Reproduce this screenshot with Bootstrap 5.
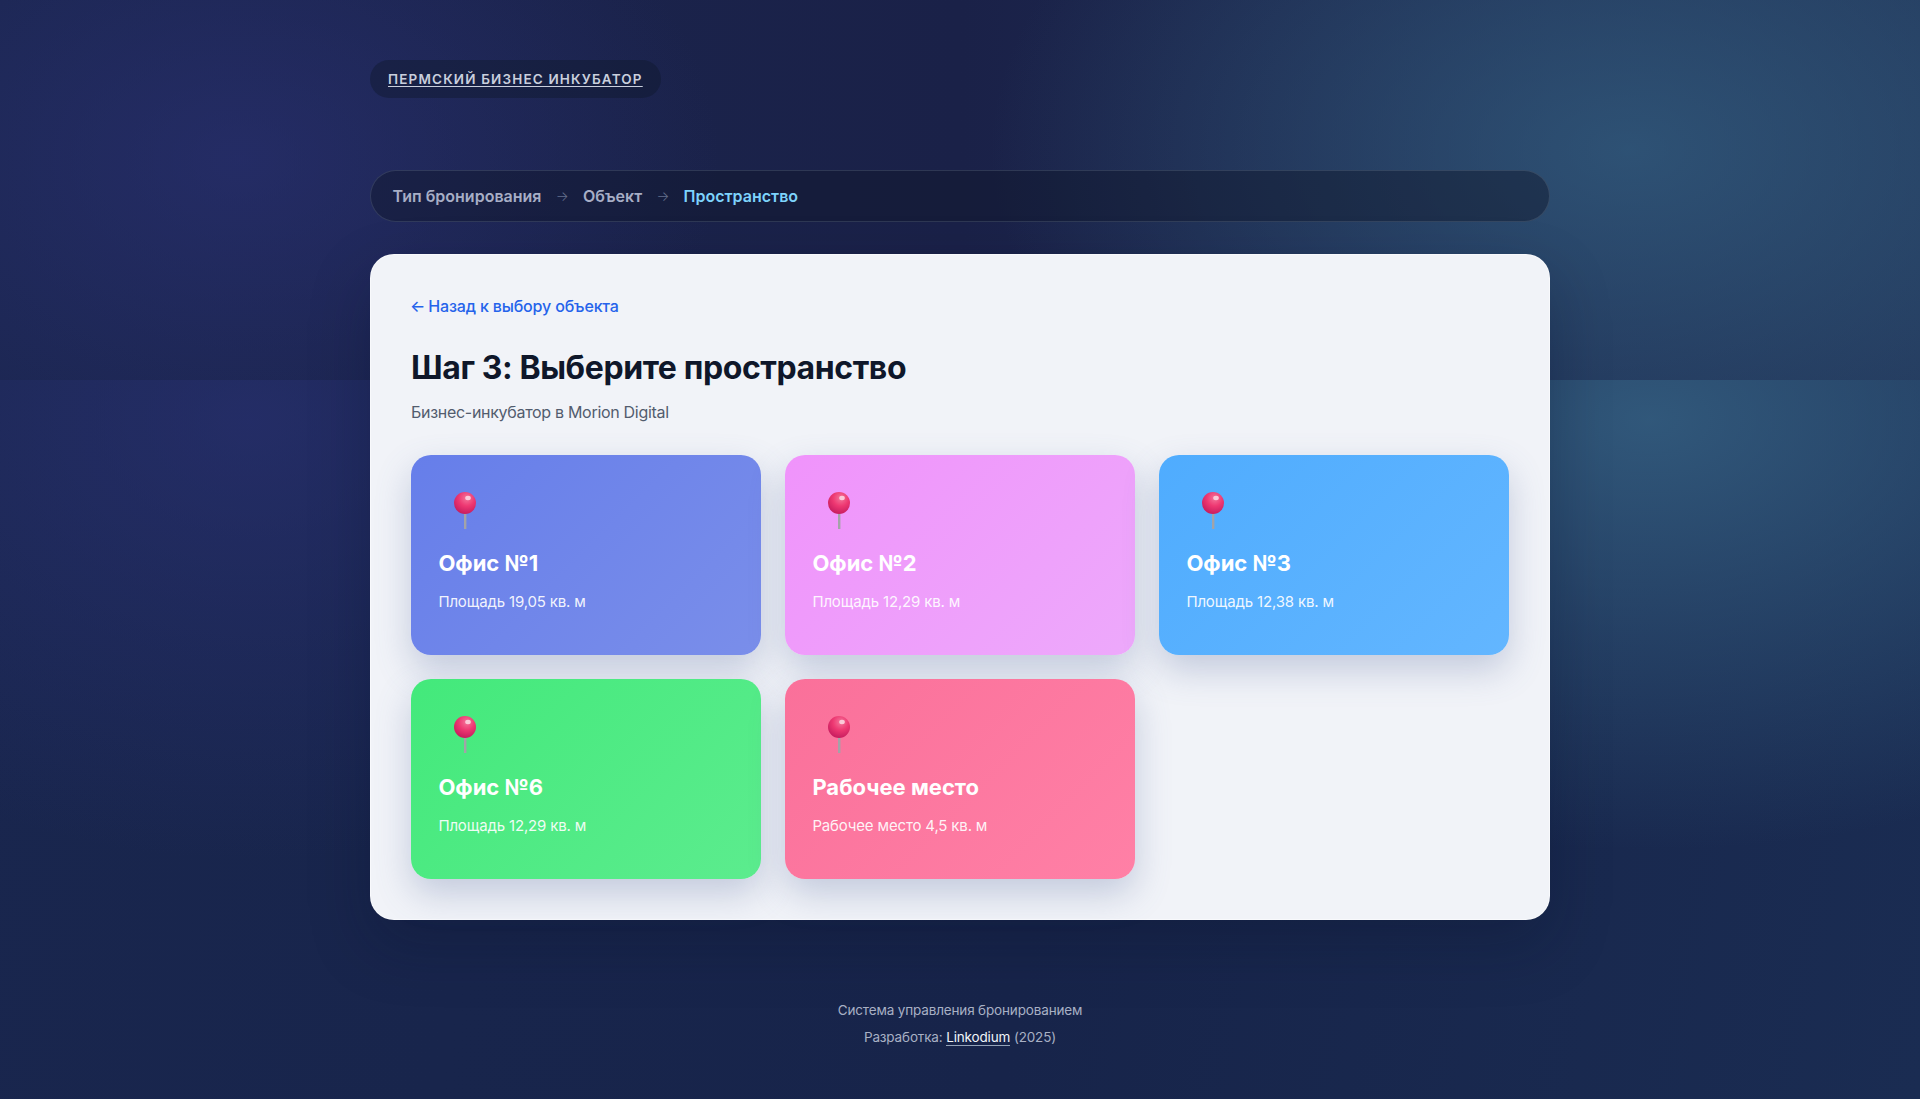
<!DOCTYPE html>
<html lang="ru">
<head>
<meta charset="utf-8">
<title>Пермский бизнес инкубатор</title>
<link rel="stylesheet" href="https://cdn.jsdelivr.net/npm/bootstrap@5.3.0/dist/css/bootstrap.min.css">
<style>
html,body{height:100%}
body{font-family:"Inter","Noto Sans",sans-serif;min-height:1099px;background-color:#17244a;
background-image:
 radial-gradient(ellipse 480px 340px at 240px 160px,rgba(44,50,120,.55),transparent 100%),
 radial-gradient(ellipse 640px 400px at 1630px 150px,rgba(52,96,130,.7),transparent 100%),
 linear-gradient(90deg,#1b2650 0%,#1a2148 50%,#22365a 100%),
 radial-gradient(ellipse 600px 440px at 250px 40px,rgba(44,50,120,.58),transparent 100%),
 radial-gradient(ellipse 720px 430px at 1650px 40px,rgba(54,98,132,.82),transparent 100%),
 linear-gradient(100deg,#19264e 0%,#17244a 55%,#1a2c52 100%);
background-size:100% 380px,100% 380px,100% 380px,100% 719px,100% 719px,100% 719px;
background-position:0 0,0 0,0 0,0 380px,0 380px,0 380px;
background-repeat:no-repeat}
.shell{width:1180px;padding-top:60px}
.logo-pill{height:38px;padding:0 18px;background:rgba(15,23,42,.42);margin-bottom:72px}
.logo-pill a{font-size:13.5px;font-weight:600;letter-spacing:1.16px;color:#c9cfdd;text-underline-offset:2px}
.crumbs{height:52px;padding:0 21.5px;background:rgba(15,23,42,.45);border:1px solid rgba(148,163,184,.2);margin-bottom:32px;font-size:16px;font-weight:600;color:#a7aec6}
.crumbs .sep{color:#64708c;font-weight:300;font-size:13.5px;margin:0 14.3px}
.crumbs .now{color:#7dd3fc}
.panel{background:#f1f3f8;border:1px solid rgba(255,255,255,.5);border-radius:24px;padding:39px 40px 40px;box-shadow:0 25px 60px rgba(8,14,40,.25)}
.back{color:#2563eb;font-size:16px;font-weight:500;letter-spacing:-.16px;text-decoration:none;line-height:24px}
.back span{margin:0 -1px 0 -1px}
.ttl{font-size:32px;font-weight:700;letter-spacing:-.4px;color:#0f172a;line-height:44px;margin:28px 0 10px}
.sub{font-size:16px;letter-spacing:-.3px;color:#525c6e;line-height:24px;margin-bottom:31px}
.tiles{display:grid;grid-template-columns:repeat(3,350px);gap:24.5px 24px;grid-auto-rows:199.5px}
.tile{border-radius:20px;padding:36.5px 27.4px 0;color:#fff;box-shadow:0 15px 35px rgba(90,110,160,.3)}
.tile h3{font-size:22px;font-weight:700;line-height:30px;margin:12px 0 13px}
.tile p{font-size:15px;letter-spacing:-.16px;line-height:22px;margin:0;color:rgba(255,255,255,.92)}
.pin{display:block;margin-left:12px;width:30px;height:44px}
.t1{background:linear-gradient(135deg,#667eea,#7a8eea)}
.t2{background:linear-gradient(135deg,#f093fb,#eda9fb)}
.t3{background:linear-gradient(135deg,#4facfe,#63b6ff)}
.t4{background:linear-gradient(135deg,#43e97b,#5cec8e)}
.t5{background:linear-gradient(135deg,#fa709a,#ff80a6)}
.foot{margin-top:77px;font-size:13.5px;letter-spacing:-.15px;line-height:27px;color:#a8b0c4}
.foot a{color:#f1f5f9;text-decoration:none;border-bottom:1px solid #94a3b8}
</style>
</head>
<body>
<svg width="0" height="0" class="d-block">
<defs>
<radialGradient id="ball" cx="58%" cy="28%" r="72%"><stop offset="0" stop-color="#f4749a"/><stop offset=".5" stop-color="#ee3872"/><stop offset="1" stop-color="#c81d5f"/></radialGradient>
<symbol id="pinmark" viewBox="0 0 30 44">
<rect x="14" y="20" width="2.4" height="17" fill="#a3a3a8"/>
<circle cx="15" cy="11" r="11" fill="url(#ball)"/>
<ellipse cx="18" cy="6" rx="2.8" ry="2.2" fill="#fbc9d8"/>
</symbol>
</defs>
</svg>
<div class="shell mx-auto">
<div class="d-inline-flex align-items-center rounded-pill logo-pill"><a href="#">ПЕРМСКИЙ БИЗНЕС ИНКУБАТОР</a></div>
<nav class="d-flex align-items-center rounded-pill crumbs"><span>Тип бронирования</span><span class="sep">→</span><span>Объект</span><span class="sep">→</span><span class="now">Пространство</span></nav>
<main class="panel">
<a class="back" href="#"><span>←</span> Назад к выбору объекта</a>
<h1 class="ttl">Шаг 3: Выберите пространство</h1>
<p class="sub">Бизнес-инкубатор в Morion Digital</p>
<div class="tiles">
<div class="tile t1"><svg class="pin"><use href="#pinmark"/></svg><h3>Офис №1</h3><p>Площадь 19,05 кв. м</p></div>
<div class="tile t2"><svg class="pin"><use href="#pinmark"/></svg><h3>Офис №2</h3><p>Площадь 12,29 кв. м</p></div>
<div class="tile t3"><svg class="pin"><use href="#pinmark"/></svg><h3>Офис №3</h3><p>Площадь 12,38 кв. м</p></div>
<div class="tile t4"><svg class="pin"><use href="#pinmark"/></svg><h3>Офис №6</h3><p>Площадь 12,29 кв. м</p></div>
<div class="tile t5"><svg class="pin"><use href="#pinmark"/></svg><h3>Рабочее место</h3><p>Рабочее место 4,5 кв. м</p></div>
</div>
</main>
<footer class="foot text-center"><div>Система управления бронированием</div><div>Разработка: <a href="#">Linkodium</a> (2025)</div></footer>
</div>
<script src="https://cdn.jsdelivr.net/npm/bootstrap@5.3.0/dist/js/bootstrap.bundle.min.js"></script>
</body>
</html>
